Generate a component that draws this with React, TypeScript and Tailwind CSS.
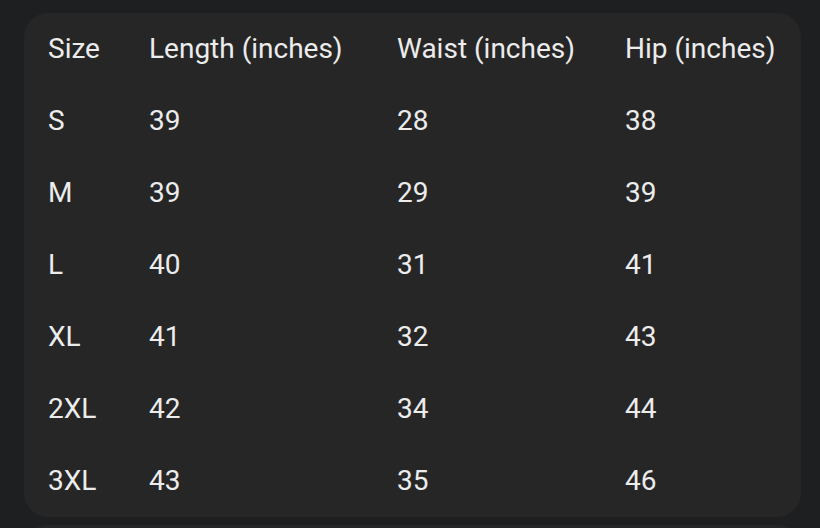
const rows = [
  ["S", "39", "28", "38"],
  ["M", "39", "29", "39"],
  ["L", "40", "31", "41"],
  ["XL", "41", "32", "43"],
  ["2XL", "42", "34", "44"],
  ["3XL", "43", "35", "46"],
];

const headers = ["Size", "Length (inches)", "Waist (inches)", "Hip (inches)"];

export default function App() {
  return (
    <div className="h-[528px] w-[820px] overflow-hidden bg-[#1e1f21] pl-6 pr-[19px] pt-[13px] font-['Roboto',sans-serif] text-[#ececec]">
      <div className="h-[504px] rounded-[24px] bg-[#262626] px-6">
        <table className="w-full border-collapse text-left text-[28px] leading-none">
          <thead>
            <tr className="h-[72px]">
              {headers.map((h, i) => (
                <th
                  key={h}
                  className={
                    "p-0 font-normal " +
                    (i === 0 ? "w-[101px]" : i === 1 ? "w-[248px]" : i === 2 ? "w-[228px]" : "")
                  }
                >
                  {h}
                </th>
              ))}
            </tr>
          </thead>
          <tbody>
            {rows.map((r) => (
              <tr key={r[0]} className="h-[72px]">
                {r.map((c, i) => (
                  <td key={i} className="p-0">
                    {c}
                  </td>
                ))}
              </tr>
            ))}
          </tbody>
        </table>
      </div>
      <div className="mt-2 h-10 rounded-t-[24px] bg-[#262626]" />
    </div>
  );
}
